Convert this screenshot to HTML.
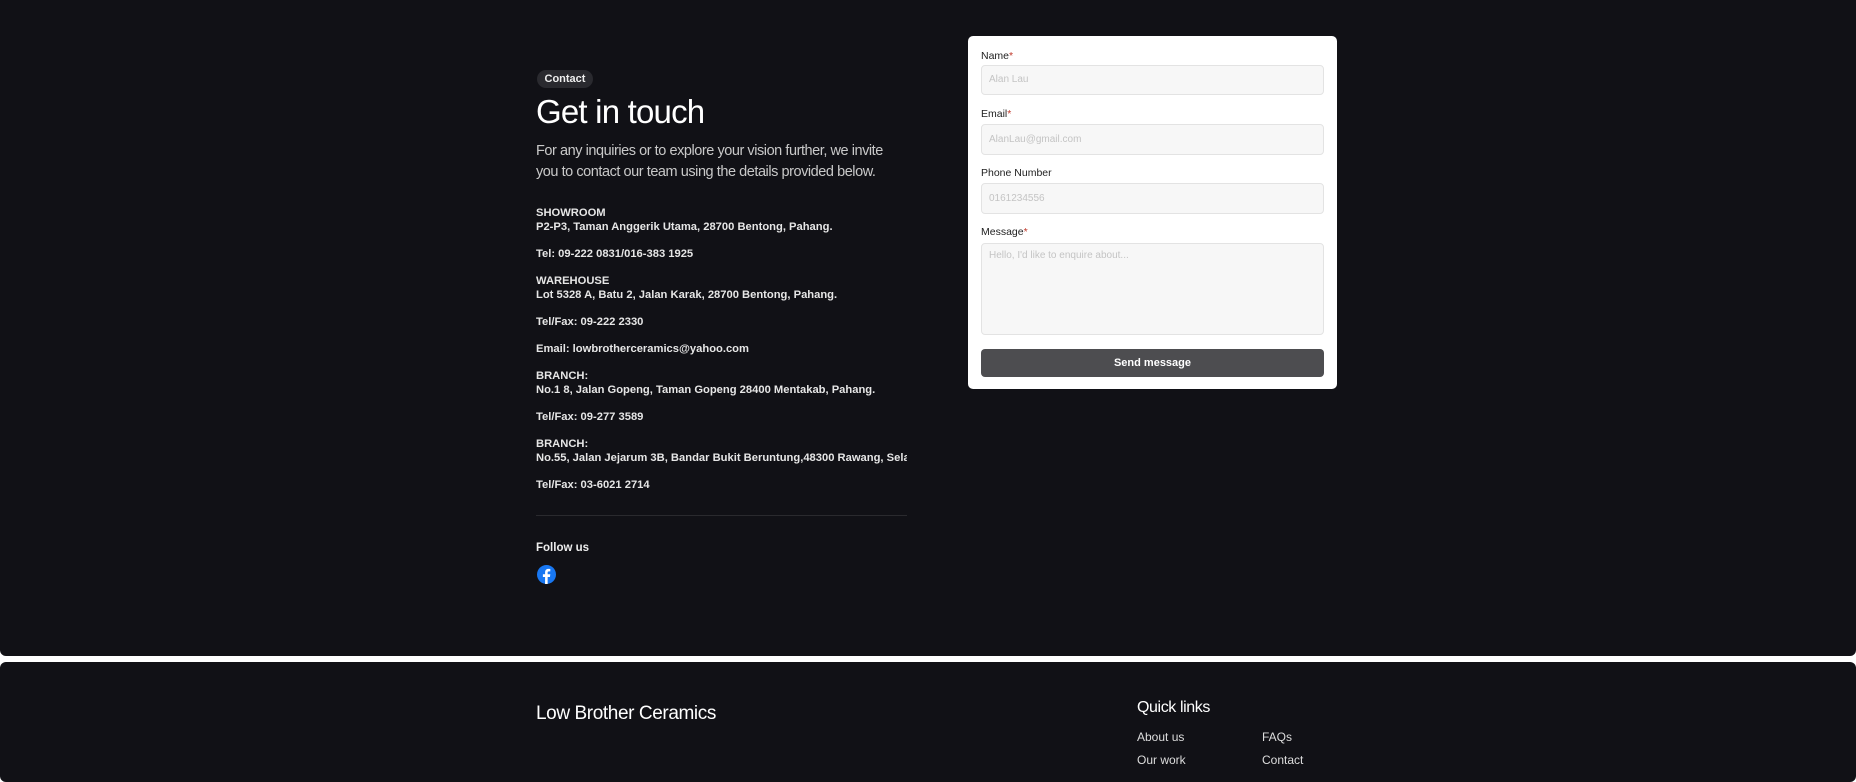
<!DOCTYPE html>
<html><head><meta charset="utf-8"><style>
*{margin:0;padding:0;box-sizing:border-box}
body{width:1856px;height:767px;background:#fff;font-family:"Liberation Sans",sans-serif;position:relative;overflow:hidden}
.sec{position:absolute;left:0;width:1856px;background:#111116;border-radius:6px}
.a{position:absolute;white-space:nowrap}
.info{color:#e6e6e6;font-size:11.2px;font-weight:bold;line-height:14px}
.lbl{position:absolute;left:13px;font-size:10.5px;color:#222}
.lbl b{color:#c0392b;font-weight:normal}
.inp{position:absolute;left:13px;width:343px;background:#f7f7f7;border:1px solid #e3e3e3;border-radius:4px;font-size:10px;color:#c4c4c4;padding-left:7px}
</style></head><body>
<div class="sec" style="top:0;height:656px;border-radius:0 0 6px 6px"></div>
<div class="sec" style="top:662px;height:120px"></div>

<div class="a" style="left:537px;top:70px;width:56px;height:18px;border-radius:9px;background:#2a2a2f;color:#eee;font-size:11px;font-weight:bold;line-height:18px;text-align:center">Contact</div>
<div class="a" style="left:536px;top:93px;color:#fff;font-size:33px;letter-spacing:-0.8px">Get in touch</div>
<div class="a" style="left:536px;top:141px;color:#c9c9c9;font-size:14.5px;line-height:21px;letter-spacing:-0.45px">For any inquiries or to explore your vision further, we invite<br>you to contact our team using the details provided below.</div>

<div class="a info" style="left:536px;top:206px;width:371px;overflow:hidden">
SHOWROOM<br>P2-P3, Taman Anggerik Utama, 28700 Bentong, Pahang.<br><div style="height:13px"></div>
Tel: 09-222 0831/016-383 1925<br><div style="height:13px"></div>
WAREHOUSE<br>Lot 5328 A, Batu 2, Jalan Karak, 28700 Bentong, Pahang.<br><div style="height:13px"></div>
Tel/Fax: 09-222 2330<br><div style="height:13px"></div>
Email: lowbrotherceramics@yahoo.com<br><div style="height:13px"></div>
BRANCH:<br>No.1 8, Jalan Gopeng, Taman Gopeng 28400 Mentakab, Pahang.<br><div style="height:13px"></div>
Tel/Fax: 09-277 3589<br><div style="height:13px"></div>
BRANCH:<br>No.55, Jalan Jejarum 3B, Bandar Bukit Beruntung,48300 Rawang, Selangor.<br><div style="height:13px"></div>
Tel/Fax: 03-6021 2714
</div>
<div class="a" style="left:536px;top:515px;width:371px;height:1px;background:#2a2a2e"></div>
<div class="a" style="left:536px;top:542px;color:#eee;font-size:11.5px;font-weight:bold">Follow us</div>
<svg class="a" style="left:537px;top:565px" width="19" height="19" viewBox="0 0 20 20"><circle cx="10" cy="10" r="10" fill="#1877f2"/><path d="M11.2 20V12.6h2.4l.4-2.8h-2.8V8.1c0-.8.3-1.4 1.4-1.4H14V4.2c-.3 0-1.100-.1-2-.1-2.1 0-3.500 1.3-3.500 3.6v2.1H6.2v2.8h2.3V20z" fill="#fff"/></svg>

<div class="a" style="left:968px;top:36px;width:369px;height:353px;background:#fff;border-radius:5px">
<div class="lbl" style="top:14px">Name<b>*</b></div>
<div class="inp" style="top:29px;height:30px;line-height:28px">Alan Lau</div>
<div class="lbl" style="top:72px">Email<b>*</b></div>
<div class="inp" style="top:88px;height:31px;line-height:29px">AlanLau@gmail.com</div>
<div class="lbl" style="top:131px">Phone Number</div>
<div class="inp" style="top:147px;height:31px;line-height:29px">0161234556</div>
<div class="lbl" style="top:190px">Message<b>*</b></div>
<div class="inp" style="top:207px;height:92px;line-height:10px;padding-top:7px">Hello, I'd like to enquire about...</div>
<div class="a" style="left:13px;top:313px;width:343px;height:28px;background:#4d4d50;border-radius:4px;color:#fff;font-size:11px;font-weight:bold;text-align:center;line-height:28px">Send message</div>
</div>

<div class="a" style="left:536px;top:703px;color:#fff;font-size:19px;letter-spacing:-0.4px">Low Brother Ceramics</div>
<div class="a" style="left:1137px;top:699px;color:#fff;font-size:16px;letter-spacing:-0.4px">Quick links</div>
<div class="a" style="left:1137px;top:730px;color:#ddd;font-size:12px">About us</div>
<div class="a" style="left:1262px;top:730px;color:#ddd;font-size:12px">FAQs</div>
<div class="a" style="left:1137px;top:753px;color:#ddd;font-size:12px">Our work</div>
<div class="a" style="left:1262px;top:753px;color:#ddd;font-size:12px">Contact</div>
</body></html>
